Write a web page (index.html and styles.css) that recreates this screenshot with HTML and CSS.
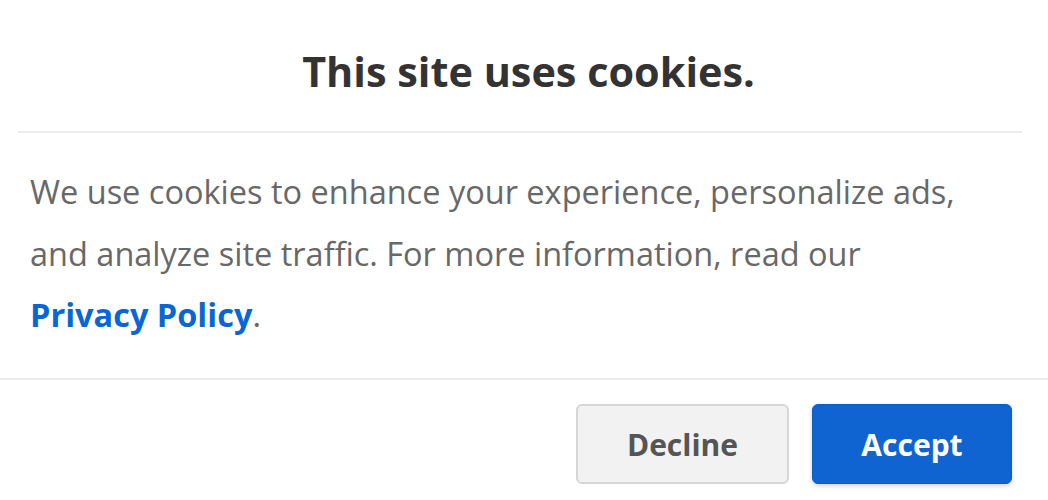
FILE: index.html
```html
<!DOCTYPE html>
<html>
<head>
<meta charset="utf-8">
<link rel="stylesheet" href="styles.css">
</head>
<body>
<div class="dialog">
  <div class="header">
    <h1 class="title">This site uses cookies.</h1>
  </div>
  <div class="content">
    <p class="text">We use cookies to enhance your experience, personalize ads, and analyze site traffic. For more information, read our <a class="link" href="#">Privacy Policy</a>.</p>
  </div>
  <div class="footer">
    <button class="btn btn-decline">Decline</button>
    <button class="btn btn-accept">Accept</button>
  </div>
</div>
</body>
</html>
```
FILE: styles.css
```css
html, body {
  margin: 0;
  padding: 0;
  background: #ffffff;
}
body {
  font-family: "Open Sans", "Noto Sans", sans-serif;
  width: 1048px;
  height: 500px;
  overflow: hidden;
}
.dialog {
  display: flex;
  flex-direction: column;
}
.header {
  margin: 0 26px 0 18px;
  height: 131px;
  border-bottom: 2px solid #ececec;
  display: flex;
  align-items: center;
  justify-content: center;
}
.title {
  margin: 0;
  font-size: 41.4px;
  font-weight: 700;
  color: #333333;
  padding: 10px 0 0 17px;
}
.content {
  padding: 0 60px 0 30px;
  height: 245px;
  border-bottom: 2px solid #ececec;
}
.text {
  margin: 0;
  padding-top: 28px;
  font-size: 32.5px;
  line-height: 61.5px;
  color: #686868;
}
.link {
  color: #0a66d2;
  font-weight: 700;
  text-decoration: none;
  white-space: nowrap;
}
.footer {
  display: flex;
  justify-content: flex-end;
  gap: 23px;
  padding: 24px 36px 0 0;
}
.btn {
  height: 80px;
  font-family: inherit;
  font-size: 30px;
  font-weight: 700;
  border-radius: 6px;
  cursor: pointer;
}
.btn-decline {
  width: 213px;
  background: #f2f2f2;
  color: #555555;
  border: 2px solid #d6d6d6;
}
.btn-accept {
  width: 200px;
  background: #0f64d2;
  color: #ffffff;
  border: 1px solid #0c5cc4;
  box-shadow: 0 2px 5px rgba(0, 0, 0, 0.18);
}
```
